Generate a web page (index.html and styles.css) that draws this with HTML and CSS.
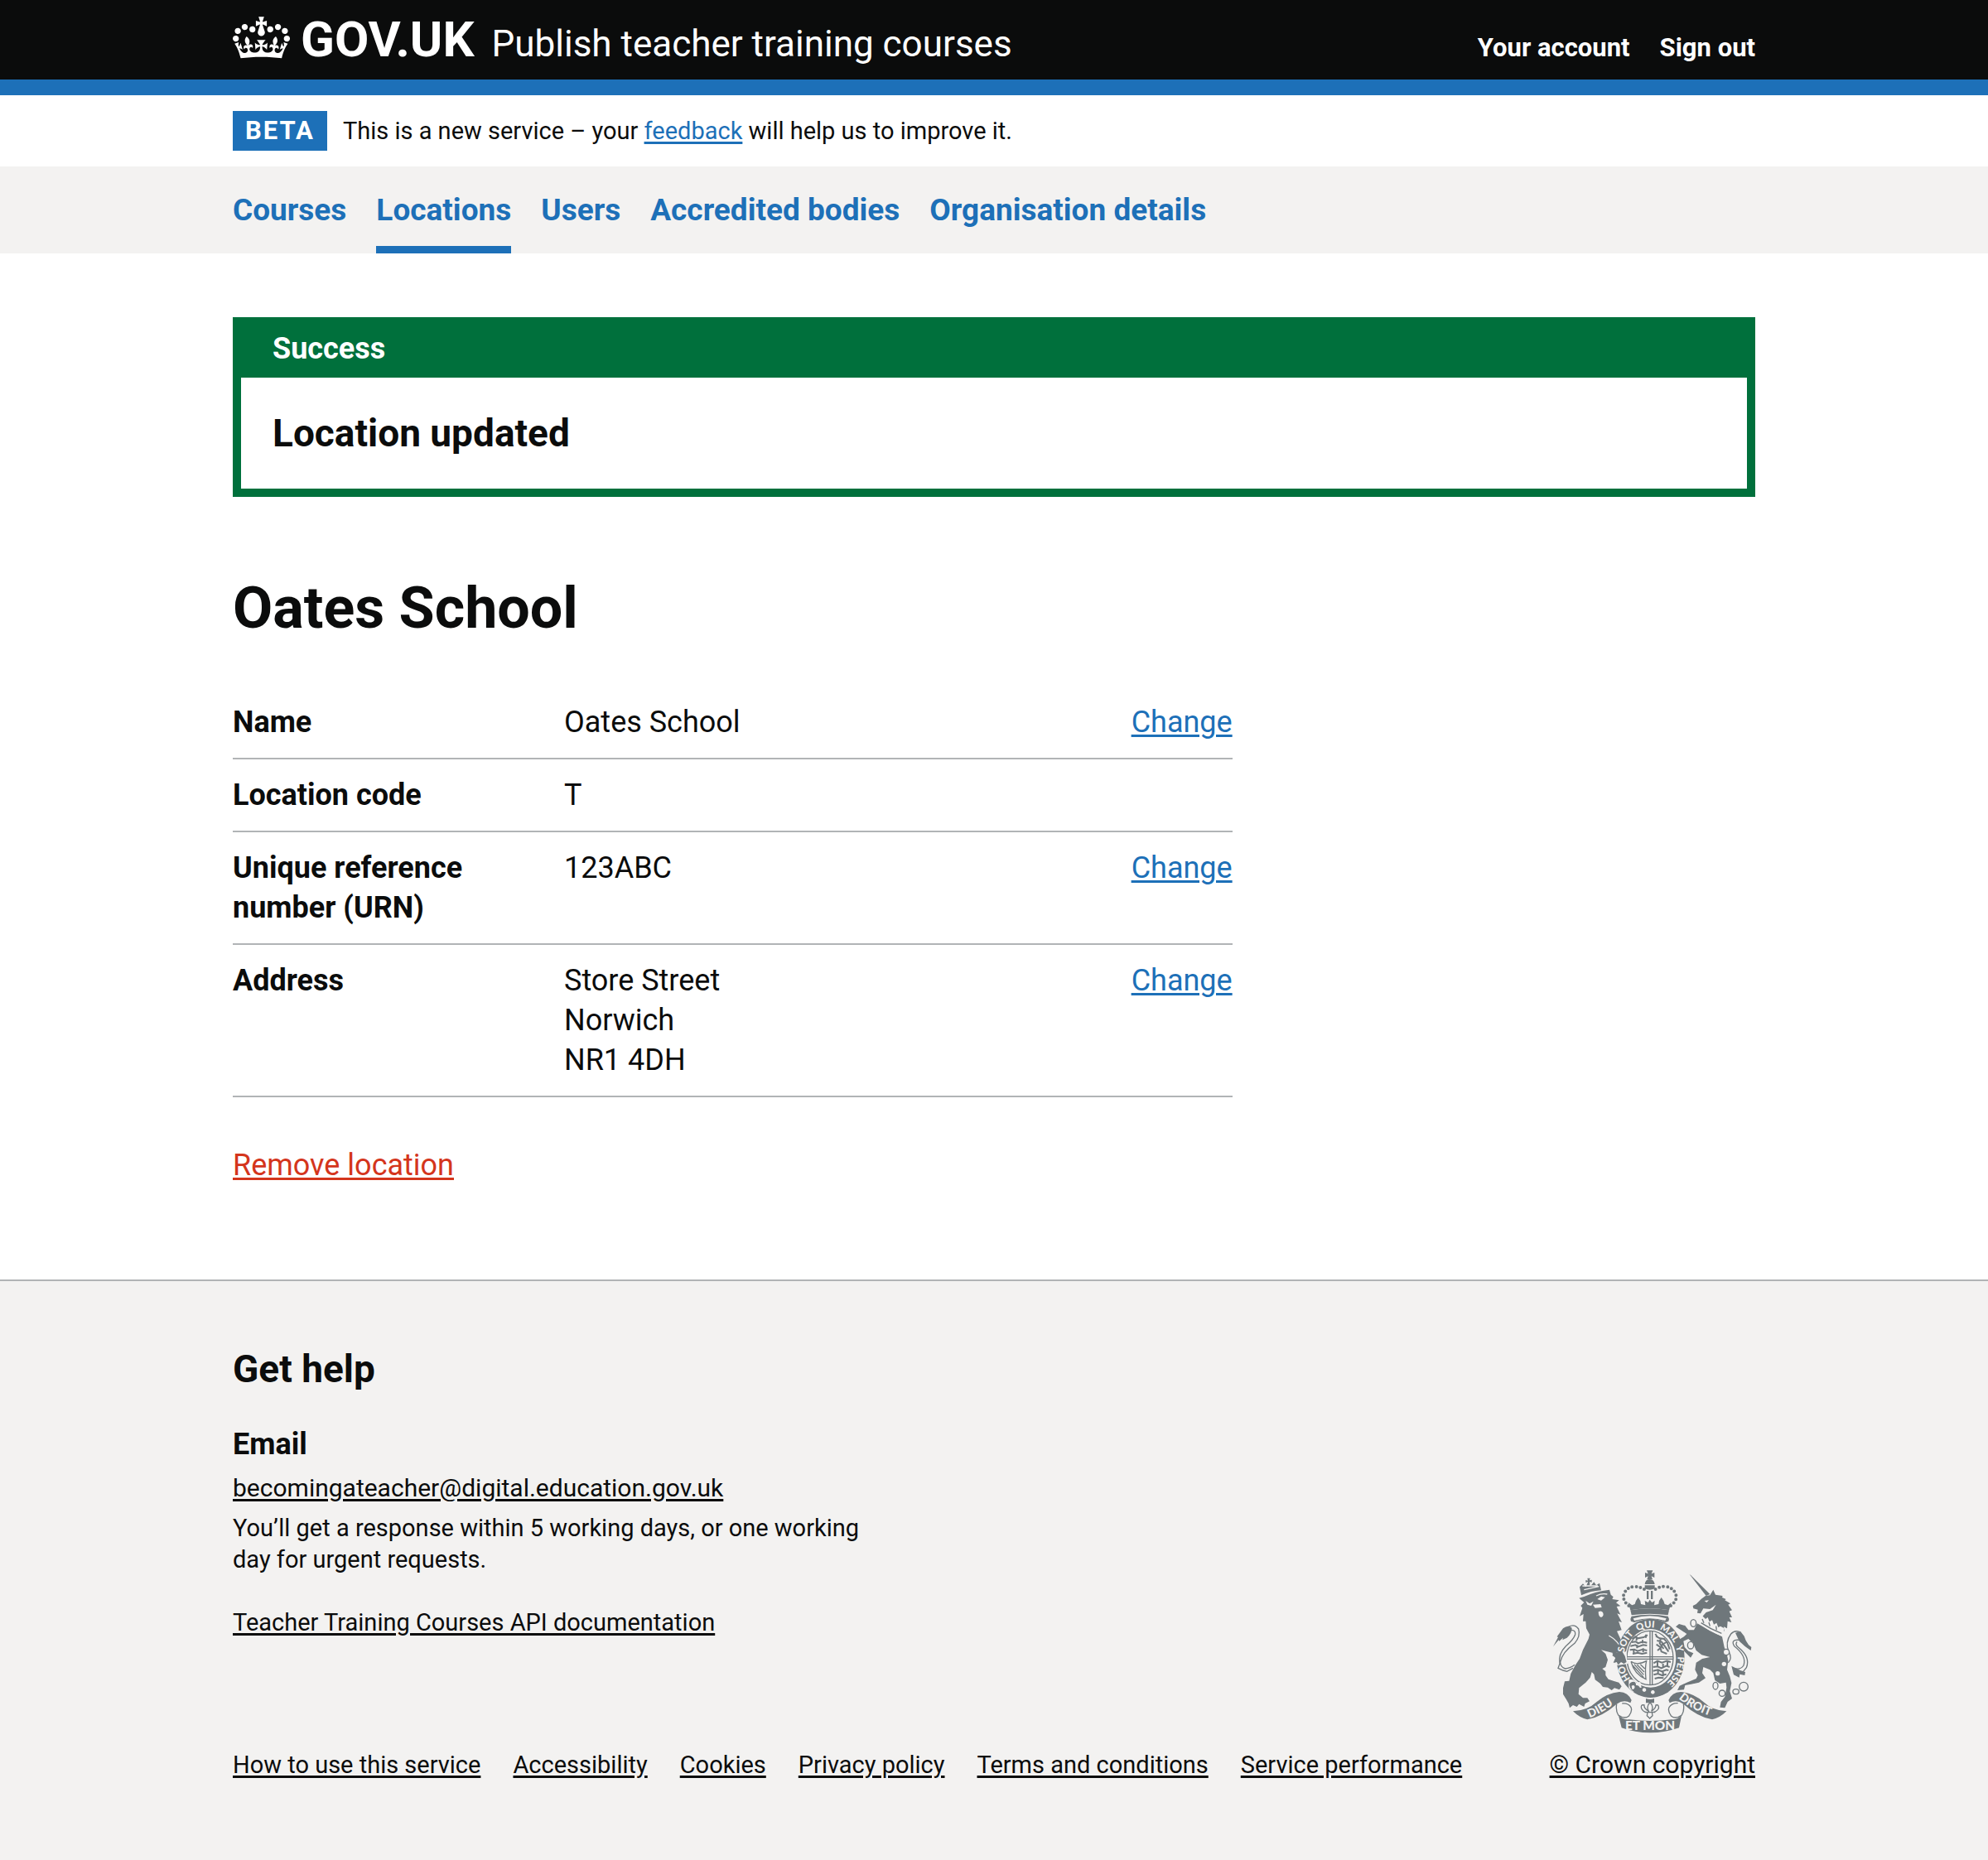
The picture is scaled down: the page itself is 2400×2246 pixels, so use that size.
FILE: index.html
```html
<!DOCTYPE html>
<html lang="en">
<head>
<meta charset="utf-8">
<meta name="viewport" content="width=device-width, initial-scale=1">
<title>Oates School - Publish teacher training courses - GOV.UK</title>
<link rel="stylesheet" href="styles.css">
</head>
<body>
<header class="header">
  <div class="container header-row">
    <a class="logo" href="#">
      <svg class="logo-crown" viewBox="0 0 132 97" aria-hidden="true"><path fill="currentColor" fill-rule="evenodd" d="M25 30.2c3.5 1.5 7.7-.2 9.1-3.7 1.5-3.6-.2-7.8-3.9-9.2-3.6-1.4-7.6.3-9.1 3.9-1.4 3.5.3 7.5 3.9 9zM9 39.5c3.6 1.5 7.8-.2 9.2-3.7 1.5-3.6-.2-7.8-3.9-9.1-3.6-1.5-7.6.2-9.1 3.8-1.4 3.5.3 7.5 3.8 9zM4.4 57.2c3.5 1.5 7.7-.2 9.1-3.8 1.5-3.6-.2-7.7-3.9-9.1-3.5-1.5-7.6.3-9.1 3.8-1.4 3.5.3 7.6 3.9 9.1zm38.3-21.4c3.5 1.5 7.7-.2 9.1-3.8 1.5-3.6-.2-7.7-3.9-9.1-3.6-1.5-7.6.3-9.1 3.8-1.3 3.6.4 7.7 3.9 9.1zm64.4-5.6c-3.6 1.5-7.8-.2-9.1-3.7-1.5-3.6.2-7.8 3.8-9.2 3.6-1.4 7.7.3 9.2 3.9 1.3 3.5-.4 7.5-3.9 9zm15.9 9.3c-3.6 1.5-7.7-.2-9.1-3.7-1.5-3.6.2-7.8 3.7-9.1 3.6-1.5 7.7.2 9.2 3.8 1.5 3.5-.3 7.5-3.8 9zm4.7 17.7c-3.6 1.5-7.8-.2-9.2-3.8-1.5-3.6.2-7.7 3.9-9.1 3.6-1.5 7.7.3 9.2 3.8 1.3 3.5-.4 7.6-3.9 9.1zM89.3 35.8c-3.6 1.5-7.8-.2-9.2-3.8-1.4-3.6.2-7.7 3.9-9.1 3.6-1.5 7.7.3 9.2 3.8 1.4 3.6-.3 7.7-3.9 9.1zM69.7 17.7l8.9 4.7V9.3l-8.9 2.8c-.2-.3-.5-.6-.9-.9L72.4 0H59.6l3.5 11.2c-.3.3-.6.5-.9.9l-8.8-2.8v13.1l8.8-4.7c.3.3.6.7.9.9l-5 15.4v.1c-.2.8-.4 1.6-.4 2.4 0 4.1 3.1 7.5 7 8.1h.2c.3 0 .7.1 1 .1.4 0 .7 0 1-.1h.2c4-.6 7.1-4.1 7.1-8.1 0-.8-.1-1.7-.4-2.4V34l-5.1-15.4c.4-.2.7-.6 1-.9zM66 92.8c16.9 0 32.8 1.1 47.1 3.2 4-16.9 8.9-26.7 14-33.5l-9.6-3.4c1 4.9 1.1 7.2 0 10.2-1.5-1.4-3-4.3-4.2-8.7L108.6 76c2.8-2 5-3.2 7.5-3.3-4.4 9.4-10 11.9-13.6 11.2-4.3-.8-6.3-4.6-5.6-7.9 1-4.7 5.7-5.9 8-.5 4.3-8.7-3-11.4-7.6-8.8 7.1-7.2 7.9-13.5 2.1-21.1-8 6.1-8.1 12.3-4.5 20.8-4.7-5.4-12.1-2.5-9.5 6.2 3.4-5.2 7.9-2 7.2 3.1-.6 4.3-6.4 7.8-13.5 7.2-10.3-.9-10.9-8-11.2-13.8 2.5-.5 7.1 1.8 11 7.3L80.2 60c-4.1 4.4-8 5.3-12.3 5.4 1.4-4.4 8-11.6 8-11.6H55.5s6.4 7.2 7.9 11.6c-4.2-.1-8-1-12.3-5.4l1.4 16.4c3.9-5.5 8.5-7.7 10.9-7.3-.3 5.8-.9 12.8-11.1 13.8-7.2.6-12.9-2.9-13.5-7.2-.7-5 3.8-8.3 7.1-3.1 2.7-8.7-4.6-11.6-9.4-6.2 3.7-8.5 3.6-14.7-4.6-20.8-5.8 7.6-5 13.9 2.2 21.1-4.7-2.6-11.9.1-7.7 8.8 2.3-5.5 7.1-4.2 8.1.5.7 3.3-1.3 7.1-5.7 7.9-3.5.7-9-1.8-13.5-11.2 2.5.1 4.7 1.3 7.5 3.3l-4.7-15.4c-1.2 4.4-2.7 7.2-4.3 8.7-1.1-3-.9-5.3 0-10.2l-9.5 3.4c5 6.9 9.9 16.7 14 33.5 14.8-2.1 30.8-3.2 47.7-3.2z"/></svg>
      <span class="logo-text">GOV.UK</span>
    </a>
    <a class="service-name" href="#">Publish teacher training courses</a>
    <nav class="account-links" aria-label="Account">
      <a href="#">Your account</a>
      <a href="#">Sign out</a>
    </nav>
  </div>
</header>

<div class="container phase">
  <strong class="phase-tag">BETA</strong>
  <span>This is a new service – your <a class="link" href="#">feedback</a> will help us to improve it.</span>
</div>

<nav class="primary-nav" aria-label="Primary">
  <ul class="container nav-list">
    <li><a href="#">Courses</a></li>
    <li><a href="#" aria-current="page">Locations</a></li>
    <li><a href="#">Users</a></li>
    <li><a href="#">Accredited bodies</a></li>
    <li><a href="#">Organisation details</a></li>
  </ul>
</nav>

<main class="container main">
  <section class="banner" role="alert" aria-labelledby="banner-title">
    <h2 class="banner-title" id="banner-title">Success</h2>
    <p class="banner-content">Location updated</p>
  </section>
  <h1 class="page-title">Oates School</h1>
  <div class="columns">
    <div>
      <dl class="summary">
        <div class="summary-row">
          <dt>Name</dt>
          <dd>Oates School</dd>
          <dd><a class="link" href="#" aria-label="Change name">Change</a></dd>
        </div>
        <div class="summary-row">
          <dt>Location code</dt>
          <dd>T</dd>
        </div>
        <div class="summary-row">
          <dt>Unique reference number (URN)</dt>
          <dd>123ABC</dd>
          <dd><a class="link" href="#" aria-label="Change unique reference number">Change</a></dd>
        </div>
        <div class="summary-row">
          <dt>Address</dt>
          <dd>Store Street<br>Norwich<br>NR1 4DH</dd>
          <dd><a class="link" href="#" aria-label="Change address">Change</a></dd>
        </div>
      </dl>
      <a class="link link-danger" href="#">Remove location</a>
    </div>
  </div>
</main>

<footer class="footer">
  <div class="container footer-row">
    <div>
      <h2 class="footer-title">Get help</h2>
      <h3 class="footer-subtitle">Email</h3>
      <div class="help">
        <a class="link link-plain link-wide" href="#">becomingateacher@digital.education.gov.uk</a>
        <p class="help-note">You’ll get a response within 5 working days, or one working day for urgent requests.</p>
        <a class="link link-plain" href="#">Teacher Training Courses API documentation</a>
      </div>
      <ul class="footer-links">
        <li><a class="link link-plain" href="#">How to use this service</a></li>
        <li><a class="link link-plain" href="#">Accessibility</a></li>
        <li><a class="link link-plain" href="#">Cookies</a></li>
        <li><a class="link link-plain" href="#">Privacy policy</a></li>
        <li><a class="link link-plain" href="#">Terms and conditions</a></li>
        <li><a class="link link-plain" href="#">Service performance</a></li>
      </ul>
    </div>
    <div class="copyright">
      <svg class="arms" viewBox="66 45 732 600" aria-hidden="true">
        <defs>
          <path id="garter-path" pathLength="360" d="M425 481A98 111 0 0 1 425 259A98 111 0 0 1 425 481"/>
          <path id="dieu-path" d="M204 586Q256 566 316 518"/>
          <path id="droit-path" d="M526 516Q576 560 656 584"/>
        </defs>
        <!-- lion -->
        <g class="arms-fill">
          <path d="M166 152L184 147Q225 128 276 122L281 140L290 148L286 156L311 160L300 169L316 181L302 183L316 212L304 208L321 240L309 236L320 268L303 272L312 292L326 322L330 350L339 384L328 390L320 384L310 393L303 383L292 386L298 368L286 360L292 352L262 344L246 340L262 354L270 376L262 402L250 408L262 418L262 432L272 446L290 452L310 458L320 472L312 484L294 478L284 486L270 476L252 474L243 462L224 448L220 428L212 420L206 440L190 458L166 478L164 500L180 514L196 514L204 526L188 534L184 546L166 536L158 546L144 540L132 550L128 534L120 520L108 500L108 478L114 454L130 452L136 426L152 396L168 372L180 340L200 300L204 284L192 262L190 236L180 236L182 210L168 218L178 188L172 180L184 168Z"/>
          <path d="M174 142L168 112L180 100L190 112L198 96L208 108L220 94L228 106L240 98L246 124Q208 126 174 142Z"/>
          <path d="M196 80h10l-2 8 8-2v9l-8-2 1 10h-8l1-10-8 3v-9l8 2Z"/>
          <path d="M72 328L90 294L86 292L108 262Q126 248 140 260Q140 280 122 296L106 304L108 296L94 308L92 304Z"/>
        </g>
        <path class="arms-line" d="M128 256Q150 244 164 264Q172 290 150 316Q104 350 98 384Q98 402 116 408Q136 406 150 394M138 268Q154 268 152 284Q146 302 118 326Q90 354 96 390L90 406L108 414L122 418L144 406"/>
        <path class="arms-light" d="M190 162l14 10 14-8-8 16-14-4ZM232 156l14-10 14 3-14 12ZM216 176l28-2 4 12-24 2ZM236 202q10-6 16 2q6 12-6 18q-10-2-10-20Z"/>
        <path class="arms-thin-light" d="M274 288Q304 304 328 346M178 108h56M184 122l54-12M228 144q20-10 40-6"/>
        <!-- unicorn -->
        <g class="arms-fill">
          <path d="M566 66L571 70L640 138L626 144Z"/>
          <path d="M608 156L624 144L640 142L652 122L660 140L686 144L684 150L698 156L694 160L714 172L706 176L720 196L710 200L720 222L710 222L718 240L704 236L702 262L690 256L692 272L660 258L612 220L626 204L650 196L662 176L640 192L616 190L606 208L594 206L596 194L580 190L578 180L590 174Z"/>
          <path d="M594 244L640 270L684 292L692 330L700 350L706 378L702 412L712 436L718 460L712 490L720 516L704 528L694 550L676 548L680 528L694 510L700 476L698 458L676 462L658 450L652 424L640 412L616 402L612 424L624 442L600 458L572 464L550 468L546 484L522 486L530 470L556 458L590 444L596 432L586 412L590 386L612 372L640 366L610 358L590 342L580 318L562 300L544 308L548 330L562 344L580 352L570 368L548 346L530 330L526 304L546 292L556 282L538 270L516 256L528 246L550 252L562 268L582 268Z"/>
          <path d="M732 278L750 272L764 290L770 306L780 322L790 330L788 342L776 334L766 326L746 308Z"/>
          <path d="M718 398L730 404L750 414L768 420L766 432L748 428L746 440L726 430Z"/>
        </g>
        <path class="arms-line" d="M706 386Q722 370 708 346Q694 312 716 282Q728 268 746 274M744 304Q714 302 728 326Q774 362 762 396Q750 414 726 406M738 310Q730 320 742 330Q788 366 772 404L756 424"/>
        <g class="arms-ring">
          <ellipse cx="580" cy="243" rx="10" ry="13"/><ellipse cx="570" cy="323" rx="11" ry="13"/>
          <circle cx="699" cy="348" r="11"/><ellipse cx="660" cy="470" rx="9" ry="13"/>
          <circle cx="684" cy="497" r="11"/><circle cx="762" cy="473" r="16"/><ellipse cx="734" cy="491" rx="11" ry="9"/>
        </g>
        <circle class="arms-light" cx="691" cy="391" r="8"/><circle class="arms-light" cx="668" cy="425" r="8"/>
        <path class="arms-light" d="M604 224L612 216L624 228L632 222L638 238L648 232L654 248L664 242L670 258L678 254L692 262L684 290Q636 274 602 244Z"/>
        <path class="arms-line" d="M608 242Q644 266 682 280M612 228l6 14M636 240l4 14M662 254l2 14"/>
        <path class="arms-light" d="M620 162l16-2-8 8Z"/>
        <!-- garter -->
        <ellipse class="arms-fill" cx="425" cy="370" rx="123" ry="143"/>
        <ellipse class="arms-light" cx="425" cy="370" rx="92" ry="106"/>
        <ellipse class="arms-line" cx="423" cy="369" rx="84" ry="98"/>
        <text class="arms-text arms-text-garter"><textPath href="#garter-path" startOffset="46">HO</textPath></text>
        <text class="arms-text arms-text-garter"><textPath href="#garter-path" startOffset="101">SOIT</textPath></text>
        <text class="arms-text arms-text-garter"><textPath href="#garter-path" startOffset="153">QUI</textPath></text>
        <text class="arms-text arms-text-garter"><textPath href="#garter-path" startOffset="198">MAL</textPath></text>
        <text class="arms-text arms-text-garter"><textPath href="#garter-path" startOffset="246">Y</textPath></text>
        <text class="arms-text arms-text-garter"><textPath href="#garter-path" startOffset="267">PENSE</textPath></text>
        <path class="arms-light" d="M300 350L336 346L344 390L304 396Z"/>
        <path class="arms-fill" d="M286 352L322 346L332 362L338 384L328 390L318 384L308 394L302 384L290 386L298 370Z"/>
        <path class="arms-line" d="M423 270V468M431 271V468M340 365H507M340 373H507"/>
        <g class="arms-beast">
          <path d="M358 300l12-8 8 6 22-4 14-8M356 312l16-2 8 6 16-6 16 4M352 326l18-4 10 6 18-6 14 2M350 340l16-2 12 6 18-6 16 4M360 354l18-4 16 4 18-4M374 292v14M396 304v12M376 322v12M398 334v14M364 338v14M408 284v12"/>
          <path d="M444 290l14 8 16 2 12 14 8 24M448 306l16 4 12 16 14 20M446 320l14 10 4 16 20 8M450 342l10-8 8-14 14-8M462 296l-4 20 14 20M442 282l8 12"/>
          <path d="M436 388l14-8 16 6 18-6 14 4M434 402l16-2 14 6 18-8 12 4M434 416l18-4 14 6 16-6 8 2M436 430l16-4 14 6 16-4M440 444l14-4 18 2M450 382v16M470 390v14M452 412v14M470 420v16M486 384v18"/>
        </g>
        <path class="arms-line" d="M354 382Q376 398 410 380Q404 404 408 446Q366 428 354 382M366 392L400 430M376 394L402 420M388 392L404 408M360 396L400 440"/>
        <path class="arms-light" d="M346 448Q364 444 374 458L388 456L392 476Q378 486 362 494L346 478Z"/>
        <path class="arms-fill" d="M358 456Q372 452 372 468Q382 466 386 476Q424 492 478 478L490 492Q434 522 376 498Q352 490 348 466Q350 458 358 456Z"/>
        <path class="arms-light" d="M356 470q10-6 12 4q-2 12-10 8ZM402 478a7 7 0 1 0 .1 0ZM433 486a7 7 0 1 0 .1 0Z"/>
        <!-- crown -->
        <g class="arms-fill">
          <path d="M411 52h22l-5 12 11-4v18l-11-5 4 12h-20l4-12-11 5V60l11 4Z"/>
          <path d="M404 102Q406 84 421 84Q438 84 440 102ZM404 106h36v12q-18 8-36 0ZM411 126h7v30h-7ZM426 126h7v30h-7Z"/>
          <path d="M352 196L344 168L358 178L368 174L372 162L380 150L388 162L390 174L406 178L404 162L416 168L422 158L430 168L440 162L438 178L454 174L456 162L464 150L472 162L476 174L488 178L500 168L492 196Q422 184 352 196Z"/>
          <path d="M352 196Q422 184 492 196L488 214Q422 204 356 214Z"/>
          <path d="M356 218Q350 226 354 236L366 240Q422 216 480 240L490 236Q494 226 488 218Q422 206 356 218Z"/>
        </g>
        <path class="arms-light" d="M362 226Q422 208 482 226L478 234Q422 218 366 234Z"/>
        <path class="arms-dots" d="M346 180Q322 160 328 138Q338 112 368 110Q392 112 404 122M498 180Q524 160 516 138Q506 112 476 110Q452 112 440 122"/>
        <!-- ribbon and plant -->
        <g class="arms-fill">
          <path d="M144 562Q196 560 230 528Q268 496 312 492Q344 494 356 522L352 532Q328 518 302 536Q250 582 196 592Q168 586 144 562Z"/>
          <path d="M700 562Q650 560 616 528Q578 496 534 492Q502 494 490 522L494 532Q518 518 544 536Q594 582 648 592Q676 586 700 562Z"/>
          <path d="M308 574Q322 594 346 592Q424 602 502 592Q524 594 538 574L528 622Q478 640 424 640Q368 640 320 622Z"/>
          <path d="M408 516Q424 522 438 516V532H408Z"/>
        </g>
        <path class="arms-line" d="M302 536Q298 560 308 576Q330 592 346 580Q360 562 354 548Q344 532 322 534M544 536Q548 560 538 576Q516 592 500 580Q486 562 492 548Q502 532 524 533M423 530Q408 544 418 562Q400 552 402 540Q388 536 392 552Q398 566 414 566L412 578L422 588L432 578L430 566Q446 566 454 552Q456 536 444 540Q444 552 428 562Q438 544 423 530M404 566H442"/>
        <text class="arms-text arms-text-side"><textPath href="#dieu-path">DIEU</textPath></text>
        <text class="arms-text arms-text-side"><textPath href="#droit-path">DROIT</textPath></text>
        <text class="arms-text arms-text-base" x="423" y="629" text-anchor="middle">ET MON</text>
      </svg>
      <a class="link link-plain link-wide" href="#">© Crown copyright</a>
    </div>
  </div>
</footer>
</body>
</html>
```
FILE: styles.css
```css
:root {
  --ink: #0b0c0c;
  --blue: #1d70b8;
  --green: #00703c;
  --red: #d4351c;
  --rule: #b1b4b6;
  --pale: #f3f2f1;
  --arms: #6f777b;
}

* {
  box-sizing: border-box;
}

body,
h1,
h2,
h3,
p,
ul,
dl,
dd {
  margin: 0;
  padding: 0;
}

body {
  background: #fff;
  color: var(--ink);
  font-family: Roboto, "Liberation Sans", sans-serif;
  font-size: 36px;
  line-height: 48px;
}

ul {
  list-style: none;
}

.container {
  max-width: 1838px;
  margin: 0 auto;
}

.link {
  color: var(--blue);
  text-decoration: underline;
  text-decoration-thickness: 3px;
  text-underline-offset: 3px;
}

.link-danger {
  color: var(--red);
}

.link-plain {
  color: var(--ink);
}

.link-wide {
  font-size: 30px;
}

.header {
  background: var(--ink);
  border-bottom: 19px solid var(--blue);
  color: #fff;
}

.header a {
  color: #fff;
  text-decoration: none;
}

.header-row {
  display: flex;
  align-items: baseline;
  padding: 14px 0;
}

.logo {
  display: flex;
  align-items: baseline;
  gap: 13px;
  margin-right: 21px;
  font-size: 60px;
  font-weight: 700;
  line-height: 68px;
}

.logo-crown {
  align-self: flex-start;
  width: 69px;
  height: 51px;
  margin-top: 6px;
}

.service-name {
  font-size: 44px;
  line-height: 48px;
}

.account-links {
  display: flex;
  gap: 36px;
  margin-left: auto;
  font-size: 31px;
  font-weight: 700;
  line-height: 38px;
}

.phase {
  display: flex;
  align-items: center;
  gap: 19px;
  padding: 19px 0;
  font-size: 29px;
  line-height: 48px;
}

.phase-tag {
  padding: 0 15px;
  background: var(--blue);
  color: #fff;
  font-size: 31px;
  letter-spacing: 2px;
}

.primary-nav {
  background: var(--pale);
}

.nav-list {
  display: flex;
  gap: 36px;
  font-size: 37px;
  font-weight: 700;
}

.nav-list a {
  display: block;
  padding: 29px 0 19px;
  border-bottom: 9px solid transparent;
  color: var(--blue);
  text-decoration: none;
}

.nav-list a[aria-current] {
  border-color: var(--blue);
}

.main {
  padding: 77px 0 114px;
}

.banner {
  border: 10px solid var(--green);
}

.banner-title {
  padding: 4px 38px 11px;
  background: var(--green);
  color: #fff;
  font-size: 36px;
  line-height: 48px;
}

.banner-content {
  padding: 38px;
  font-size: 46px;
  font-weight: 700;
  line-height: 58px;
}

.page-title {
  margin: 96px 0 56px;
  font-size: 70px;
  line-height: 77px;
}

.columns {
  display: grid;
  grid-template-columns: 2fr 1fr;
  gap: 28px;
}

.summary {
  margin-bottom: 58px;
}

.summary-row {
  display: grid;
  grid-template-columns: 400px 1fr auto;
  padding: 19px 0;
  border-bottom: 2px solid var(--rule);
}

.summary dt {
  padding-right: 38px;
  font-weight: 700;
}

.footer {
  padding: 77px 0 96px;
  border-top: 2px solid var(--rule);
  background: var(--pale);
  font-size: 29px;
  line-height: 38px;
}

.footer-row {
  display: flex;
  align-items: flex-end;
  justify-content: space-between;
}

.footer-title {
  margin-bottom: 38px;
  font-size: 46px;
  line-height: 58px;
}

.footer-subtitle {
  margin-bottom: 10px;
  font-size: 36px;
  line-height: 48px;
}

.help {
  max-width: 800px;
  margin-bottom: 134px;
}

.help-note {
  margin: 10px 0 38px;
}

.footer-links {
  display: flex;
  flex-wrap: wrap;
  gap: 0 39px;
}

.copyright {
  display: flex;
  flex-direction: column;
  align-items: center;
  gap: 18px;
}

.arms {
  width: 244px;
  height: 200px;
}

.arms-fill {
  fill: var(--arms);
}

.arms-line {
  fill: none;
  stroke: var(--arms);
  stroke-width: 4;
}

.arms-ring {
  fill: var(--pale);
  stroke: var(--arms);
  stroke-width: 4;
}

.arms-light {
  fill: var(--pale);
}

.arms-thin-light {
  fill: none;
  stroke: var(--pale);
  stroke-width: 4;
}

.arms-beast {
  fill: none;
  stroke: var(--arms);
  stroke-width: 6;
}

.arms-dots {
  fill: none;
  stroke: var(--arms);
  stroke-width: 12;
  stroke-dasharray: 0 15;
  stroke-linecap: round;
}

.arms-text {
  fill: var(--pale);
  font-family: Lato, sans-serif;
  font-weight: 900;
}

.arms-text-garter {
  font-size: 34px;
}

.arms-text-side {
  font-size: 42px;
}

.arms-text-base {
  font-size: 46px;
}
```
